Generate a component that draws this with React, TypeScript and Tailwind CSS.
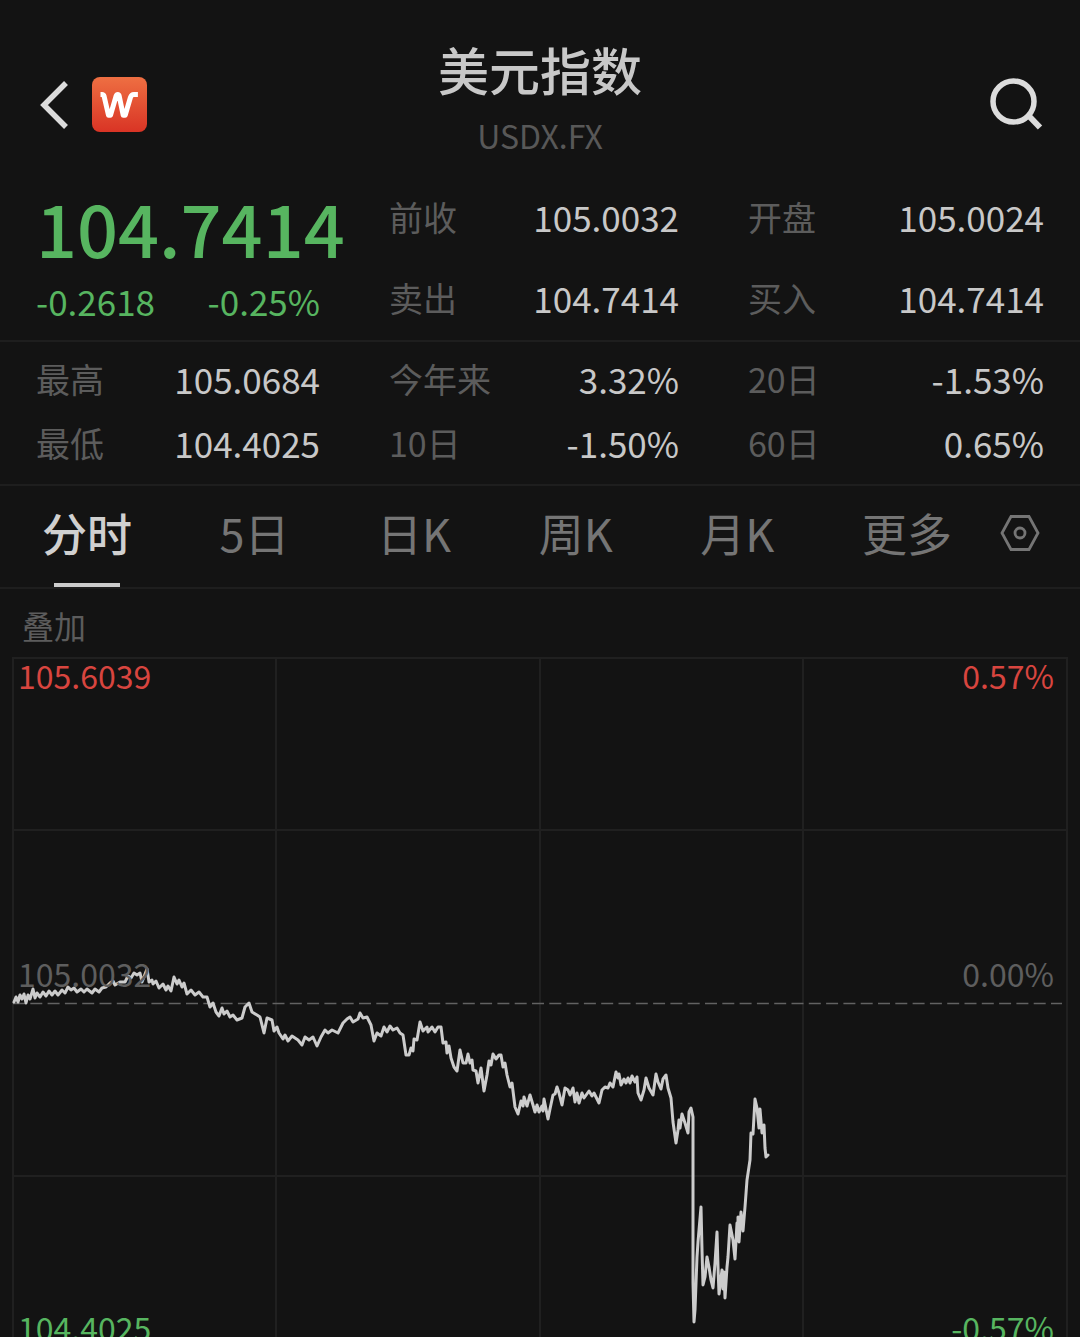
import { clsx } from 'clsx';

const QUOTES = [
  { label: '前收', value: '105.0032' },
  { label: '开盘', value: '105.0024' },
  { label: '卖出', value: '104.7414' },
  { label: '买入', value: '104.7414' },
];

const STATS = [
  { label: '最高', value: '105.0684' },
  { label: '今年来', value: '3.32%' },
  { label: '20日', value: '-1.53%' },
  { label: '最低', value: '104.4025' },
  { label: '10日', value: '-1.50%' },
  { label: '60日', value: '0.65%' },
];

const TABS = ['分时', '5日', '日K', '周K', '月K', '更多'];

// Intraday line, x and y in the 1080 x 692 chart box
const LINE = `14,345 16,340 18,345 20,338 22,342 24,337 26,346 28,338 30,342 33,332 35,341 37,336 40,340 43,335 46,339
49,334 52,338 55,334 58,338 62,333 65,336 68,330 71,333 74,331 77,335 81,332 84,335 87,332 92,336 95,332 99,335 102,331
106,330 110,326 113,324 115,328 120,325 125,325 128,319 131,321 134,316 137,318 140,316 142,325 147,312 149,325 152,323
153,327 156,324 159,331 163,327 166,333 168,329 171,334 174,320 177,327 179,323 182,330 184,326 187,337 191,333 195,338
199,335 203,340 207,340 210,350 213,346 216,355 219,359 222,351 224,357 227,354 230,360 233,358 237,363 242,361 245,350
249,346 252,355 257,358 260,360 264,376 267,361 272,363 274,374 277,370 279,376 283,382 285,378 288,384 292,379 295,381
298,383 302,388 305,380 309,383 313,380 317,389 321,380 325,373 328,376 332,373 338,376 343,366 347,362 350,360 353,365
358,362 360,356 363,361 367,360 371,368 374,384 377,376 381,379 384,370 387,375 390,369 393,373 397,371 400,376 403,378
406,398 409,398 411,391 413,394 414,382 417,383 420,365 423,374 427,370 428,375 432,370 435,375 438,370 441,370 443,386
446,385 447,396 449,389 451,401 454,410 457,414 460,393 463,406 466,406 468,397 470,406 472,403 473,413 476,414 478,426
481,411 484,434 487,418 489,404 491,408 493,397 496,402 499,398 501,398 503,410 505,406 507,418 510,430 512,426 515,450
518,457 521,444 523,449 524,440 527,449 530,438 533,448 535,455 537,448 539,455 542,449 543,454 544,442 548,462 550,452
553,438 555,437 557,430 559,436 562,448 565,431 568,433 570,438 573,431 575,445 577,436 579,446 582,436 584,441 589,434
592,439 594,436 599,446 602,433 605,430 608,431 610,426 613,430 616,415 618,421 619,417 621,428 624,422 626,426 628,421
630,426 632,419 635,425 637,420 638,436 641,443 644,433 646,421 649,431 653,438 656,417 658,425 661,432 663,422 666,418
668,431 671,441 673,465 676,486 678,473 679,463 680,471 682,457 685,466 688,476 689,455 691,451 693,460 693,626 694,665
695,653 697,600 698,585 701,550 702,593 703,628 705,620 707,600 709,610 711,623 713,631 715,606 717,575 718,610 719,637
722,613 723,632 724,615 725,641 727,610 728,600 730,568 733,583 735,602 737,566 738,580 738,560 739,585 741,555 743,574
745,550 747,523 750,503 751,476 753,477 755,442 757,451 759,471 760,452 762,476 764,468 765,491 766,500 768,498`;

const GRID_X = [13, 276, 540, 803, 1067];
const GRID_Y = [1, 173, 519];

function Logo() {
  return (
    <svg className="h-[55px] w-[55px]" viewBox="0 0 55 55" fill="none">
      <defs>
        <linearGradient id="logo-bg" x1="0" y1="0" x2="0" y2="1">
          <stop offset="0" stopColor="#ee6f42" />
          <stop offset="1" stopColor="#d93425" />
        </linearGradient>
      </defs>
      <rect width="55" height="55" rx="8" fill="url(#logo-bg)" />
      <path
        d="M8.500 17.500h1.500c1.200 0 1.800.6 2.100 1.700l4.400 19h2l5.600-19.200c.4-1 .9-1.500 1.600-1.500s1.300.5 1.500 1.500l4 19.200h2l5.200-17.700c.7-2.200 1.600-3 3.500-3h4"
        stroke="#fff"
        strokeWidth="5"
        strokeLinejoin="round"
      />
    </svg>
  );
}

function Header() {
  return (
    <header className="grid grid-cols-[1fr_auto_1fr] px-9 pt-[33px]">
      <div className="flex items-center gap-5 pt-2.5">
        <button aria-label="返回">
          <svg className="h-[50px] w-9" viewBox="0 0 36 50" fill="none" stroke="#dcdcdc" strokeWidth="5.500">
            <path d="M30 4 8 26 30 48" />
          </svg>
        </button>
        <a href="#home" aria-label="首页">
          <Logo />
        </a>
      </div>
      <div className="text-center">
        <h1 className="text-[51px] leading-[72px] font-medium text-[#c8c8c8]">美元指数</h1>
        <p className="text-[32px] leading-[60px] text-[#585858]">USDX.FX</p>
      </div>
      <div className="flex items-center justify-end pt-2.5">
        <button aria-label="搜索">
          <svg className="h-[56px] w-[56px]" viewBox="0 0 56 56" fill="none" stroke="#dcdcdc" strokeWidth="5.500">
            <circle cx="25.500" cy="25.500" r="20.500" />
            <path d="M40 39 52 51.500" strokeWidth="6" />
          </svg>
        </button>
      </div>
    </header>
  );
}

function Quote({ label, value }: { label: string; value: string }) {
  return (
    <div className="flex items-center justify-between whitespace-nowrap">
      <dt className="text-[34px] text-[#5c5c5c]">{label}</dt>
      <dd className="text-[35px] text-[#c8c8c8]">{value}</dd>
    </div>
  );
}

function Chart() {
  return (
    <section className="relative min-h-0 flex-1">
      <svg className="block h-[692px] w-full" viewBox="0 0 1080 692" preserveAspectRatio="none" fill="none">
        <g stroke="#202020" strokeWidth="2">
          {GRID_X.map((x) => (
            <path key={x} d={`M${x} 0V692`} />
          ))}
          {GRID_Y.map((y) => (
            <path key={y} d={`M13 ${y}H1067`} />
          ))}
        </g>
        <path d="M13 346.500H1062" stroke="#626262" strokeWidth="1.500" strokeDasharray="12 5.300" />
        <polyline points={LINE} stroke="#cccccc" strokeWidth="3" strokeLinejoin="round" strokeLinecap="round" />
      </svg>
      {/* Axis labels over the plot */}
      <div className="absolute inset-x-0 top-0 h-[692px] pr-[26px] pl-[18px] text-[32px] leading-9">
        <div className="flex justify-between text-[#d8453f]">
          <span>105.6039</span>
          <span>0.57%</span>
        </div>
        <div className="mt-[262px] flex justify-between text-[#5e5e5e]">
          <span>105.0032</span>
          <span>0.00%</span>
        </div>
        <div className="mt-[318px] flex justify-between text-[#57b560]">
          <span>104.4025</span>
          <span>-0.57%</span>
        </div>
      </div>
    </section>
  );
}

export default function App() {
  return (
    <main className="flex h-screen flex-col overflow-hidden bg-[#131313] font-['Noto_Sans_CJK_SC',sans-serif]">
      <Header />

      <section className="grid grid-cols-[284fr_655fr] gap-x-[69px] px-9 pt-[11px] pb-0.5">
        <div className="min-w-0 whitespace-nowrap text-[#57b560]">
          <p className="text-[72px] leading-[102px] font-medium">104.7414</p>
          <p className="flex justify-between text-[35px] leading-[46px]">
            <span>-0.2618</span>
            <span>-0.25%</span>
          </p>
        </div>
        <dl className="grid grid-cols-[290fr_296fr] gap-x-[69px] leading-[81px]">
          {QUOTES.map((q) => (
            <Quote key={q.label} {...q} />
          ))}
        </dl>
      </section>

      <dl className="grid grid-cols-[284fr_290fr_296fr] gap-x-[69px] border-y-2 border-[#1e1e1e] px-9 pt-[5px] pb-[9px] leading-[64px]">
        {STATS.map((s) => (
          <Quote key={s.label} {...s} />
        ))}
      </dl>

      <div className="flex items-center border-b-2 border-[#1e1e1e] pr-10 pb-2 pl-[42px] text-[45px] leading-[93px] text-[#757575]">
        <nav className="mr-12 flex flex-1 justify-between">
          {TABS.map((tab, i) => (
            <button key={tab} className={clsx('relative', i === 0 && 'font-medium text-[#d0d0d0]')}>
              {tab}
              {i === 0 && <span className="absolute inset-x-3 -bottom-2 h-1 bg-[#cccccc]" />}
            </button>
          ))}
        </nav>
        <button aria-label="设置">
          <svg className="h-10 w-10" viewBox="0 0 40 40" fill="none" stroke="#757575" strokeWidth="2.800">
            <path d="M11 3.500h18L38 20 29 36.500H11L2 20Z" />
            <circle cx="20" cy="20" r="5" />
          </svg>
        </button>
      </div>

      <div className="px-[22px] pt-1">
        <button className="text-[32px] leading-[64px] text-[#5c5c5c]">叠加</button>
      </div>

      <Chart />
    </main>
  );
}
